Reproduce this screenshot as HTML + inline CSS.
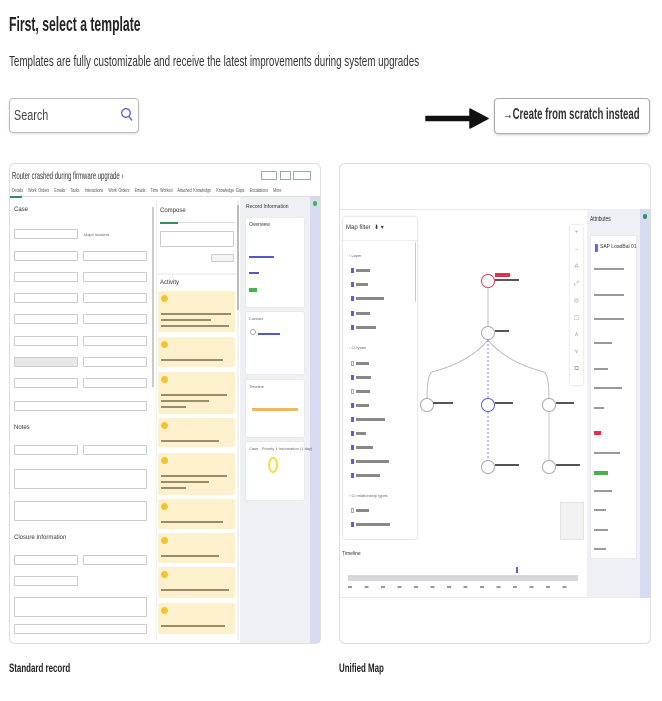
<!DOCTYPE html>
<html><head><meta charset="utf-8"><style>
*{box-sizing:border-box;margin:0;padding:0}
body{width:662px;height:701px;background:#fff;font-family:"Liberation Sans",sans-serif;color:#222;position:relative;overflow:hidden}
.a{position:absolute}
.sx{display:inline-block;transform-origin:0 0;white-space:nowrap}
.t{font-size:4px;color:#666;white-space:nowrap;position:absolute}
.in{position:absolute;border:1px solid #ccc;background:#fff;height:10px;border-radius:1px}
.act{position:absolute;left:158px;width:77px;background:#fdf0cc;border-radius:2px}
.act .av{position:absolute;left:3px;top:4px;width:7px;height:7px;border-radius:50%;background:#f4c430}
.act .l{position:absolute;height:2px;background:#9a8d6a;left:3px}
.rc{position:absolute;left:246px;width:58px;background:#fff;border-radius:2px;box-shadow:0 0 1px #ccc}
.cb{position:absolute;left:351px;width:3px;height:5px;background:#5a5fd6}
.cl{position:absolute;left:356px;height:3px;background:#888;}
.node{position:absolute;width:14px;height:14px;border-radius:50%;border:1.5px solid #aaa;background:#fff}
.attr{position:absolute;height:2px;background:#999}
</style></head><body>

<div class="a" style="left:9px;top:14px;font-size:20px;font-weight:bold;color:#222"><span class="sx" style="transform:scaleX(0.61)">First, select a template</span></div>
<div class="a" style="left:9px;top:53px;font-size:15px;color:#333"><span class="sx" style="transform:scaleX(0.655)">Templates are fully customizable and receive the latest improvements during system upgrades</span></div>

<div class="a" style="left:9px;top:98px;width:130px;height:35px;border:1px solid #bbb;border-radius:4px;box-shadow:0 1px 2px #ddd"></div>
<div class="a" style="left:14px;top:107px;font-size:15px;color:#444"><span class="sx" style="transform:scaleX(0.72)">Search</span></div>
<svg class="a" style="left:120px;top:107px" width="14" height="16" viewBox="0 0 14 16"><circle cx="6" cy="6" r="4.3" fill="none" stroke="#4a5fd8" stroke-width="1.3"/><line x1="9" y1="9.5" x2="12" y2="13.5" stroke="#4a5fd8" stroke-width="1.3"/></svg>

<svg class="a" style="left:424px;top:106px" width="68" height="26" viewBox="0 0 68 26"><path d="M2 10.5 H46 V3 L64 12.5 L46 22 V14.5 H2 Z" fill="#111" stroke="#111" stroke-linejoin="round" stroke-width="1.5"/></svg>

<div class="a" style="left:494px;top:98px;width:156px;height:36px;border:1px solid #aaa;border-radius:4px;box-shadow:0 1px 2px #ccc"></div>
<div class="a" style="left:503px;top:106px;font-size:16px;font-weight:bold;color:#333"><span class="sx" style="transform:scaleX(0.6)">→Create from scratch instead</span></div>

<!-- Card 1 -->
<div class="a" style="left:9px;top:163px;width:312px;height:481px;border:1px solid #ddd;border-radius:6px;background:#fff;overflow:hidden"></div>
<div class="a" style="left:12px;top:171px;font-size:10px;color:#333"><span class="sx" style="transform:scaleX(0.6)">Router crashed during firmware upgrade ›</span></div>
<div class="a" style="left:261px;top:171px;width:16px;height:9px;border:1px solid #9aa;border-radius:1px"></div>
<div class="a" style="left:280px;top:171px;width:11px;height:9px;border:1px solid #9aa"></div>
<div class="a" style="left:293px;top:171px;width:18px;height:9px;border:1px solid #9aa"></div>
<div class="a" style="left:12px;top:188px;font-size:5px;color:#555;word-spacing:1px"><span class="sx" style="transform:scaleX(0.72)">Details&nbsp;&nbsp; Work Orders&nbsp;&nbsp; Emails&nbsp;&nbsp; Tasks&nbsp;&nbsp; Interactions&nbsp;&nbsp; Work Orders&nbsp;&nbsp; Emails&nbsp;&nbsp; Time Worked&nbsp;&nbsp; Attached Knowledge&nbsp;&nbsp; Knowledge Gaps&nbsp;&nbsp; Escalations&nbsp;&nbsp; More</span></div>
<div class="a" style="left:10px;top:196px;width:310px;height:1px;background:#ddd"></div>
<div class="a" style="left:10px;top:196px;width:12px;height:1.5px;background:#3a8a5a"></div>
<div class="a" style="left:14px;top:207px;font-size:6px;color:#333">Case</div>
<div class="in" style="left:14px;top:229px;width:64px"></div><div class="t" style="left:84px;top:232px">Major incident</div>
<div class="in" style="left:14px;top:251px;width:64px"></div><div class="in" style="left:83px;top:251px;width:64px"></div>
<div class="in" style="left:14px;top:272px;width:64px"></div><div class="in" style="left:83px;top:272px;width:64px"></div>
<div class="in" style="left:14px;top:293px;width:64px"></div><div class="in" style="left:83px;top:293px;width:64px"></div>
<div class="in" style="left:14px;top:314px;width:64px"></div><div class="in" style="left:83px;top:314px;width:64px"></div>
<div class="in" style="left:14px;top:336px;width:64px"></div><div class="in" style="left:83px;top:336px;width:64px"></div>
<div class="in" style="left:14px;top:357px;width:64px;background:#e8e8e8"></div><div class="in" style="left:83px;top:357px;width:64px"></div>
<div class="in" style="left:14px;top:378px;width:64px"></div><div class="in" style="left:83px;top:378px;width:64px"></div>
<div class="in" style="left:14px;top:401px;width:133px"></div>
<div class="a" style="left:14px;top:425px;font-size:6px;color:#333">Notes</div>
<div class="in" style="left:14px;top:445px;width:64px"></div><div class="in" style="left:83px;top:445px;width:64px"></div>
<div class="in" style="left:14px;top:469px;width:133px;height:20px"></div>
<div class="in" style="left:14px;top:501px;width:133px;height:20px"></div>
<div class="a" style="left:14px;top:535px;font-size:6px;color:#333">Closure Information</div>
<div class="in" style="left:14px;top:555px;width:64px"></div><div class="in" style="left:83px;top:555px;width:64px"></div>
<div class="in" style="left:14px;top:576px;width:64px"></div>
<div class="in" style="left:14px;top:597px;width:133px;height:20px"></div>
<div class="in" style="left:14px;top:624px;width:133px;height:10px"></div>
<div class="a" style="left:152px;top:207px;width:2px;height:180px;background:#ccc"></div>
<div class="a" style="left:156px;top:200px;width:83px;height:440px;background:#f2f2f2"></div>
<div class="a" style="left:157px;top:200px;width:80px;height:73px;background:#fff"></div>
<div class="a" style="left:160px;top:208px;font-size:6px;color:#333">Compose</div>
<div class="a" style="left:160px;top:222px;width:75px;height:1px;background:#ddd"></div>
<div class="a" style="left:160px;top:222px;width:18px;height:1.5px;background:#3a8a5a"></div>
<div class="in" style="left:160px;top:231px;width:74px;height:16px"></div>
<div class="in" style="left:211px;top:254px;width:23px;height:8px;background:#f4f4f4"></div>
<div class="a" style="left:157px;top:275px;width:80px;height:365px;background:#fff"></div>
<div class="a" style="left:160px;top:280px;font-size:6px;color:#333">Activity</div>
<div class="act" style="top:291px;height:41px"><div class="av"></div><div class="l" style="top:22px;width:70px"></div><div class="l" style="top:28px;width:50px"></div><div class="l" style="top:34px;width:68px"></div></div>
<div class="act" style="top:337px;height:30px"><div class="av"></div><div class="l" style="top:22px;width:62px"></div></div>
<div class="act" style="top:372px;height:42px"><div class="av"></div><div class="l" style="top:22px;width:66px"></div><div class="l" style="top:28px;width:48px"></div><div class="l" style="top:34px;width:25px"></div></div>
<div class="act" style="top:418px;height:29px"><div class="av"></div><div class="l" style="top:22px;width:58px"></div></div>
<div class="act" style="top:453px;height:42px"><div class="av"></div><div class="l" style="top:22px;width:66px"></div><div class="l" style="top:28px;width:48px"></div><div class="l" style="top:34px;width:25px"></div></div>
<div class="act" style="top:499px;height:30px"><div class="av"></div><div class="l" style="top:22px;width:62px"></div></div>
<div class="act" style="top:533px;height:30px"><div class="av"></div><div class="l" style="top:22px;width:58px"></div></div>
<div class="act" style="top:567px;height:31px"><div class="av"></div><div class="l" style="top:22px;width:68px"></div></div>
<div class="act" style="top:603px;height:31px"><div class="av"></div><div class="l" style="top:22px;width:64px"></div></div>
<div class="a" style="left:237px;top:205px;width:2px;height:105px;background:#bbb"></div>
<div class="a" style="left:240px;top:197px;width:70px;height:446px;background:#eef0f4"></div>
<div class="a" style="left:310px;top:197px;width:10px;height:446px;background:#d7daf3"></div>
<div class="a" style="left:246px;top:204px;font-size:5px;color:#333">Record Information</div>
<div class="rc" style="top:218px;height:89px"><div class="t" style="left:3px;top:4px;font-size:5px;color:#333">Overview</div><div class="a" style="left:3px;top:38px;width:25px;height:2px;background:#55c"></div><div class="a" style="left:3px;top:54px;width:10px;height:2px;background:#55c"></div><div class="a" style="left:3px;top:70px;width:8px;height:4px;background:#4caf50"></div></div>
<div class="rc" style="top:312px;height:62px"><div class="t" style="left:3px;top:4px">Contact</div><div class="a" style="left:4px;top:17px;width:6px;height:6px;border-radius:50%;border:1px solid #aaa"></div><div class="a" style="left:12px;top:21px;width:22px;height:2px;background:#55c"></div></div>
<div class="rc" style="top:380px;height:57px"><div class="t" style="left:3px;top:4px">Timeline</div><div class="a" style="left:6px;top:28px;width:46px;height:3px;background:#eeb766"></div></div>
<div class="rc" style="top:442px;height:58px"><div class="t" style="left:3px;top:4px">Case - Priority 1 Information (1 day)</div><div class="a" style="left:22px;top:15px;width:10px;height:16px;border-radius:50%;border:2px solid #f0e040"></div></div>
<div class="a" style="left:313px;top:201px;width:4px;height:5px;border-radius:2px;background:#4caf50"></div>

<!-- Card 2 -->
<div class="a" style="left:339px;top:163px;width:312px;height:481px;border:1px solid #ddd;border-radius:6px"></div>
<div class="a" style="left:340px;top:209px;width:310px;height:1px;background:#e6e6e6"></div>
<div class="a" style="left:340px;top:597px;width:310px;height:1px;background:#e6e6e6"></div>
<div class="a" style="left:343px;top:217px;width:74px;height:322px;background:#fff;box-shadow:0 0 2px #bbb;border-radius:2px"></div>
<div class="a" style="left:346px;top:224px;font-size:6px;color:#333">Map filter&nbsp;&nbsp;⬇ ▾</div>
<div class="a" style="left:343px;top:240px;width:74px;height:1px;background:#eee"></div>
<div class="a" style="left:415px;top:242px;width:1px;height:60px;background:#ccc"></div>
<div class="t" style="left:349px;top:253px">› Layer</div>
<div class="cb" style="top:268px"></div><div class="cl" style="top:269px;width:14px"></div>
<div class="cb" style="top:282px"></div><div class="cl" style="top:283px;width:12px"></div>
<div class="cb" style="top:296px"></div><div class="cl" style="top:297px;width:28px"></div>
<div class="cb" style="top:311px"></div><div class="cl" style="top:312px;width:14px"></div>
<div class="cb" style="top:325px"></div><div class="cl" style="top:326px;width:20px"></div>
<div class="t" style="left:349px;top:345px">› CI types</div>
<div class="cb" style="top:361px;background:#fff;border:0.5px solid #aaa"></div><div class="cl" style="top:362px;width:13px"></div>
<div class="cb" style="top:375px"></div><div class="cl" style="top:376px;width:15px"></div>
<div class="cb" style="top:389px;background:#fff;border:0.5px solid #aaa"></div><div class="cl" style="top:390px;width:14px"></div>
<div class="cb" style="top:403px"></div><div class="cl" style="top:404px;width:13px"></div>
<div class="cb" style="top:417px"></div><div class="cl" style="top:418px;width:29px"></div>
<div class="cb" style="top:431px"></div><div class="cl" style="top:432px;width:10px"></div>
<div class="cb" style="top:445px"></div><div class="cl" style="top:446px;width:17px"></div>
<div class="cb" style="top:459px"></div><div class="cl" style="top:460px;width:33px"></div>
<div class="cb" style="top:473px"></div><div class="cl" style="top:474px;width:24px"></div>
<div class="t" style="left:349px;top:493px">› CI relationship types</div>
<div class="cb" style="top:508px;background:#fff;border:0.5px solid #aaa"></div><div class="cl" style="top:509px;width:13px"></div>
<div class="cb" style="top:522px"></div><div class="cl" style="top:523px;width:34px"></div>
<svg class="a" style="left:420px;top:270px" width="150" height="210" viewBox="420 270 150 210">
<line x1="488" y1="288" x2="488" y2="326" stroke="#aaa" stroke-width="0.8"/>
<path d="M488 340 Q470 362 432 372 Q427 375 427 398" fill="none" stroke="#aaa" stroke-width="0.8"/>
<path d="M488 340 Q506 362 544 372 Q549 375 549 398" fill="none" stroke="#aaa" stroke-width="0.8"/>
<line x1="488" y1="340" x2="488" y2="460" stroke="#6a6ae0" stroke-width="0.8" stroke-dasharray="2 2"/>
<line x1="549" y1="412" x2="549" y2="460" stroke="#bbb" stroke-width="0.8"/>
</svg>
<div class="node" style="left:481px;top:274px;border-color:#e0405a"></div>
<div class="a" style="left:495px;top:273px;width:15px;height:4px;background:#e0304a"></div>
<div class="a" style="left:495px;top:279px;width:24px;height:2px;background:#555"></div>
<div class="node" style="left:481px;top:326px"></div><div class="a" style="left:495px;top:330px;width:14px;height:2px;background:#555"></div>
<div class="node" style="left:420px;top:398px"></div><div class="a" style="left:433px;top:402px;width:20px;height:2px;background:#555"></div>
<div class="node" style="left:481px;top:398px;border-color:#5a5fd6"></div><div class="a" style="left:495px;top:402px;width:18px;height:2px;background:#555"></div>
<div class="node" style="left:542px;top:398px"></div><div class="a" style="left:556px;top:402px;width:18px;height:2px;background:#555"></div>
<div class="node" style="left:481px;top:460px"></div><div class="a" style="left:495px;top:464px;width:24px;height:2px;background:#555"></div>
<div class="node" style="left:542px;top:460px"></div><div class="a" style="left:556px;top:464px;width:24px;height:2px;background:#555"></div>
<div class="a" style="left:570px;top:225px;width:13px;height:160px;background:#fff;box-shadow:0 0 2px #ccc;font-size:6px;color:#999;text-align:center;line-height:17px">+<br>−<br>A<br>⤢<br>◎<br>▢<br>∧<br>⋎<br>⧉</div>
<div class="a" style="left:560px;top:502px;width:24px;height:38px;background:#f2f2f2;border:1px solid #e4e4e4"></div>
<div class="t" style="left:342px;top:551px;font-size:5px;color:#333">Timeline</div>
<div class="a" style="left:348px;top:575px;width:230px;height:6px;background:#d5d7dc"></div>
<div class="a" style="left:516px;top:567px;width:2px;height:6px;background:#5a5fd6"></div>
<div class="a" style="left:348px;top:586px;width:230px;height:2px;background:repeating-linear-gradient(90deg,#999 0 4px,transparent 4px 16.5px)"></div>
<div class="a" style="left:587px;top:209px;width:53px;height:389px;background:#eef0f6"></div>
<div class="a" style="left:640px;top:209px;width:10px;height:389px;background:#d7daf3"></div>
<div class="a" style="left:643px;top:214px;width:4px;height:5px;border-radius:2px;background:#2e9a5a"></div>
<div class="a" style="left:590px;top:216px;font-size:7px;color:#333"><span class="sx" style="transform:scaleX(0.7)">Attributes</span></div>
<div class="a" style="left:591px;top:236px;width:45px;height:322px;background:#fff;box-shadow:0 0 1px #ccc"></div>
<div class="a" style="left:595px;top:244px;width:3px;height:8px;background:#6a6ae0"></div>
<div class="a" style="left:600px;top:244px;font-size:5px;color:#333">SAP LoadBal 01</div>
<div class="attr" style="left:594px;top:268px;width:30px"></div>
<div class="attr" style="left:594px;top:294px;width:30px"></div>
<div class="attr" style="left:594px;top:318px;width:30px"></div>
<div class="attr" style="left:594px;top:342px;width:18px"></div>
<div class="attr" style="left:594px;top:368px;width:14px"></div>
<div class="attr" style="left:594px;top:387px;width:28px"></div>
<div class="attr" style="left:594px;top:407px;width:10px"></div>
<div class="a" style="left:594px;top:431px;width:7px;height:4px;background:#e0304a"></div>
<div class="attr" style="left:594px;top:452px;width:26px"></div>
<div class="a" style="left:594px;top:471px;width:14px;height:4px;background:#4caf50"></div>
<div class="attr" style="left:594px;top:490px;width:18px"></div>
<div class="attr" style="left:594px;top:509px;width:12px"></div>
<div class="attr" style="left:594px;top:529px;width:14px"></div>
<div class="attr" style="left:594px;top:548px;width:12px"></div>

<div class="a" style="left:9px;top:661px;font-size:12px;font-weight:bold;color:#222"><span class="sx" style="transform:scaleX(0.66)">Standard record</span></div>
<div class="a" style="left:339px;top:661px;font-size:12px;font-weight:bold;color:#222"><span class="sx" style="transform:scaleX(0.66)">Unified Map</span></div>
</body></html>
